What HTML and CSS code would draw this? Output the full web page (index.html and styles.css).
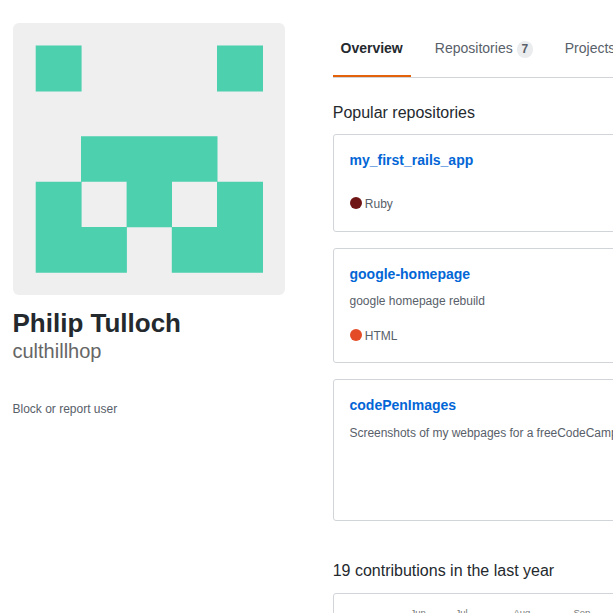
FILE: index.html
```html
<!DOCTYPE html>
<html lang="en">
<head>
<meta charset="utf-8">
<title>culthillhop (Philip Tulloch)</title>
<link rel="stylesheet" href="styles.css">
</head>
<body>
<div class="page">
  <aside class="sidebar">
    <svg class="avatar" viewBox="0 0 272 272">
      <path fill="#4dd0ae" d="M22.700 22.500H68.600V68.500H22.700zM204 22.500h46v46h-46zM68 113.300h136.500v45.400H68zM22.700 158.700h45.900V249.800H22.700zM204 158.700h46v91.100h-46zM113.600 158.500h45.400v45.800h-45.400zM67.900 204h46v45.800h-46zM158.800 204h46v45.800h-46z"/>
    </svg>
    <h1 class="name">Philip Tulloch</h1>
    <p class="login">culthillhop</p>
    <a class="report">Block or report user</a>
  </aside>
  <main class="content">
    <nav class="tabs">
      <a class="tab selected">Overview</a>
      <a class="tab">Repositories <span class="counter">7</span></a>
      <a class="tab">Projects</a>
    </nav>
    <h2 class="heading">Popular repositories</h2>
    <section class="repo first">
      <a class="title">my_first_rails_app</a>
      <p class="lang"><span class="dot ruby"></span>Ruby</p>
    </section>
    <section class="repo second">
      <a class="title">google-homepage</a>
      <p class="desc">google homepage rebuild</p>
      <p class="lang"><span class="dot html"></span>HTML</p>
    </section>
    <section class="repo third">
      <a class="title">codePenImages</a>
      <p class="desc">Screenshots of my webpages for a freeCodeCamp</p>
    </section>
    <h2 class="heading contributions">19 contributions in the last year</h2>
    <section class="calendar">
      <span>Jun</span><span>Jul</span><span>Aug</span><span>Sep</span>
    </section>
  </main>
</div>
</body>
</html>
```
FILE: styles.css
```css
* { box-sizing: border-box; }
html, body { height: 100%; overflow: hidden; }
body { margin: 0; background: #fff; color: #24292e; font: 14px/21px "Liberation Sans", Arial, sans-serif; text-indent: -0.5px; }
h1, h2, p { margin: 0; font-weight: 400; }
.page { display: grid; grid-template-columns: 272px 500px; column-gap: 48px; padding: 23px 0 0 13px; height: 613px; overflow: hidden; }
.avatar { display: block; width: 272px; height: 272px; border-radius: 6px; background: #efefef; }
.name { margin-top: 12px; font-size: 26px; line-height: 32px; font-weight: 700; }
.login { font-size: 20px; line-height: 24px; color: #666; }
.report { display: block; margin-top: 37px; font-size: 12px; line-height: 18px; color: #586069; }
.tabs { display: flex; height: 55px; border-bottom: 1px solid #d1d5da; }
.tab { flex: none; height: 54px; margin-right: 16px; padding: 15px 8px 0; color: #586069; white-space: nowrap; }
.selected { margin-right: 16.6px; border-bottom: 2px solid #e36209; color: #24292e; font-weight: 700; }
.counter { display: inline-block; padding: 2px 5px; border-radius: 20px; background: #ebecee; font-size: 12px; line-height: 13px; font-weight: 700; text-indent: 0; }
.heading { margin-top: 23px; font-size: 16px; line-height: 24px; text-indent: -0.3px; }
.repo { margin-top: 16px; padding: 15px 16px; border: 1px solid #d1d5da; border-radius: 3px; white-space: nowrap; }
.first { height: 98px; margin-top: 9px; }
.second { height: 115px; }
.third { height: 142px; }
.title { display: block; color: #0366d6; font-weight: 700; }
.desc { margin-top: 7px; font-size: 12px; line-height: 18px; color: #586069; }
.third .desc { margin-top: 8px; letter-spacing: -0.03px; }
.lang { display: flex; align-items: center; gap: 3px; margin-top: 17px; font-size: 12px; line-height: 18px; color: #586069; text-indent: -0.2px; }
.first .lang { margin-top: 24px; }
.dot { width: 12px; height: 12px; margin-bottom: 2px; border-radius: 50%; }
.ruby { background: #701516; }
.html { background: #e34c26; }
.contributions { margin-top: 38px; }
.calendar { display: grid; grid-template-columns: 45px 58px 60px auto; margin-top: 10px; height: 100px; padding: 13px 0 0 77px; border: 1px solid #d1d5da; border-radius: 3px; font-size: 9.5px; line-height: 12px; color: #767676; }
```
